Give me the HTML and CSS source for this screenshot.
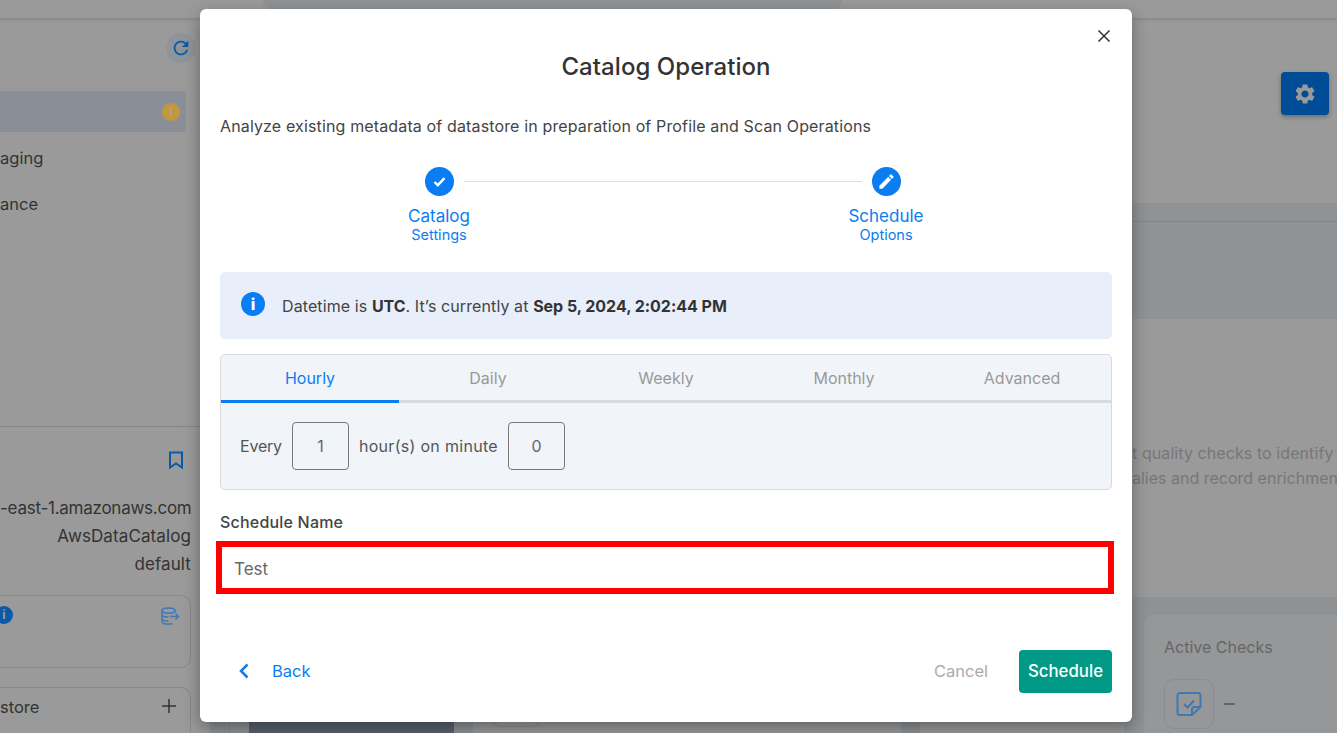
FILE: index.html
```html
<!DOCTYPE html>
<html>
<head>
	<meta charset="UTF-8">
	<title>Catalog Operation</title>
	<link rel="stylesheet" href="styles.css">
</head>
<body>
	<div class="page">
		<div class="topbar"><div class="topbar-tabs"></div></div>
		<div class="content">
			<div class="sidebar">
				<div class="refresh-row">
					<span class="refresh-btn">
						<svg width="22" height="22" viewBox="0 0 24 24"><path d="M17.65 6.35C16.2 4.9 14.21 4 12 4c-4.42 0-7.99 3.58-7.99 8s3.57 8 7.99 8c3.73 0 6.84-2.55 7.73-6h-2.08c-.82 2.33-3.04 4-5.65 4-3.31 0-6-2.69-6-6s2.69-6 6-6c1.66 0 3.14.69 4.22 1.78L13 11h7V4l-2.35 2.35z"/></svg>
					</span>
				</div>
				<div class="nav-active"><span class="warn-dot">!</span></div>
				<div class="nav-item">aging</div>
				<div class="nav-item">ance</div>
				<div class="side-info">
					<div class="bookmark-row">
						<svg width="16" height="18" viewBox="0 0 16 18"><path d="M2 1.5h12v15l-6-4-6 4z"/></svg>
					</div>
					<div class="info-line info-host">-east-1.amazonaws.com</div>
					<div class="info-line">AwsDataCatalog</div>
					<div class="info-line">default</div>
				</div>
				<div class="side-card">
					<span class="info-dot">i</span>
					<svg class="db-icon" width="20" height="20" viewBox="0 0 20 20"><ellipse cx="8.5" cy="4.5" rx="6.5" ry="2.6"/><path d="M2 4.500v11c0 1.500 3 2.600 6.500 2.600 1.500 0 3-.2 4-.6M2 8.500c0 1.500 3 2.600 6.500 2.600M2 12.500c0 1.500 3 2.600 6.500 2.600M15 4.500v2M10 10.500h8.500M15.500 7.500l3 3-3 3"/></svg>
				</div>
				<div class="side-card-add">
					<span>store</span>
					<svg width="14" height="14" viewBox="0 0 14 14"><path d="M7 0v14M0 7h14"/></svg>
				</div>
			</div>
			<div class="main">
				<div class="gear-row">
					<span class="gear-btn">
						<svg width="24" height="24" viewBox="0 0 24 24"><path d="M19.14 12.94c.04-.3.06-.61.06-.94 0-.32-.02-.64-.07-.94l2.03-1.58c.18-.14.23-.41.12-.61l-1.92-3.32c-.12-.22-.37-.29-.59-.22l-2.39.96c-.5-.38-1.03-.7-1.62-.94l-.36-2.54c-.04-.24-.24-.41-.48-.41h-3.84c-.24 0-.43.17-.47.41l-.36 2.54c-.59.24-1.13.57-1.62.94l-2.39-.96c-.22-.08-.47 0-.59.22L2.74 8.870c-.12.21-.08.47.12.61l2.03 1.58c-.05.3-.09.63-.09.94s.02.64.07.94l-2.03 1.58c-.18.14-.23.41-.12.61l1.92 3.32c.12.22.37.29.59.22l2.39-.96c.5.38 1.03.7 1.62.94l.36 2.54c.05.24.24.41.48.41h3.84c.24 0 .44-.17.47-.41l.36-2.54c.59-.24 1.13-.56 1.62-.94l2.39.96c.22.08.47 0 .59-.22l1.92-3.32c.12-.22.07-.47-.12-.61l-2.01-1.58zM12 15.600c-1.98 0-3.6-1.62-3.6-3.6s1.62-3.6 3.6-3.6 3.6 1.62 3.6 3.6-1.62 3.6-3.6 3.6z"/></svg>
					</span>
				</div>
				<div class="band-top"><div class="band-line"></div></div>
				<div class="blurb">
					<div>t quality checks to identify</div>
					<div class="blurb-tight">alies and record enrichmen</div>
				</div>
				<div class="band-bottom">
					<div class="stat-chart"><div class="chart-fill"></div></div>
					<div class="stat-wide"><div class="stat-pill"></div></div>
					<div class="stat-mid"></div>
					<div class="stat-card">
						<div class="stat-title">Active Checks</div>
						<div class="stat-value">
							<span class="stat-icon">
								<svg width="26" height="26" viewBox="0 0 26 26"><path d="M16 24H4a2.500 2.500 0 0 1-2.500-2.500v-17A2.500 2.500 0 0 1 4 2h18a2.500 2.500 0 0 1 2.500 2.500V16zM16 24v-5.500a2.500 2.500 0 0 1 2.500-2.500h6"/><path d="M8 13l3.500 3.500L18 9.500"/></svg>
							</span>
							<span class="stat-dash"></span>
						</div>
					</div>
				</div>
			</div>
		</div>
	</div>

	<div class="modal">
		<svg class="close-icon" width="14" height="14" viewBox="0 0 14 14"><path d="M1.500 1.500l11 11M12.500 1.500l-11 11"/></svg>
		<h2 class="modal-title">Catalog Operation</h2>
		<p class="modal-desc">Analyze existing metadata of datastore in preparation of Profile and Scan Operations</p>

		<div class="stepper">
			<div class="step">
				<span class="step-dot">
					<svg width="15" height="15" viewBox="0 0 15 15"><path class="tick" d="M2.500 8l3.300 3.200 6.700-7"/></svg>
				</span>
				<div class="step-name">Catalog</div>
				<div class="step-sub">Settings</div>
			</div>
			<div class="step-line"></div>
			<div class="step">
				<span class="step-dot">
					<svg width="19" height="19" viewBox="0 0 24 24"><path d="M3 17.250V21h3.750L17.810 9.940l-3.750-3.750L3 17.250zM20.710 7.040c.39-.39.39-1.020 0-1.410l-2.340-2.340c-.39-.39-1.020-.39-1.410 0l-1.830 1.830 3.750 3.750 1.830-1.830z"/></svg>
				</span>
				<div class="step-name">Schedule</div>
				<div class="step-sub">Options</div>
			</div>
		</div>

		<div class="alert">
			<span class="alert-icon">i</span>
			<span class="alert-text">Datetime is <b>UTC</b>. It’s currently at <b>Sep 5, 2024, 2:02:44 PM</b></span>
		</div>

		<div class="schedule-box">
			<div class="tabs">
				<div class="tab tab-on">Hourly</div>
				<div class="tab">Daily</div>
				<div class="tab">Weekly</div>
				<div class="tab">Monthly</div>
				<div class="tab">Advanced</div>
			</div>
			<div class="every-row">
				<span class="every-word">Every</span>
				<span class="num-box">1</span>
				<span class="every-hours">hour(s) on minute</span>
				<span class="num-box">0</span>
			</div>
		</div>

		<div class="field-label">Schedule Name</div>
		<div class="name-input">Test</div>

		<div class="modal-foot">
			<div class="back-link">
				<svg width="10" height="16" viewBox="0 0 10 16"><path d="M8.500 1.500L2 8l6.500 6.500"/></svg>
				<span>Back</span>
			</div>
			<div class="foot-right">
				<span class="cancel-link">Cancel</span>
				<span class="schedule-btn">Schedule</span>
			</div>
		</div>
	</div>
</body>
</html>
```

FILE: styles.css
```css
*{
	box-sizing: border-box;
}
html,body{
	margin: 0;
	padding: 0;
	height: 733px;
	overflow: hidden;
}
body{
	font-family: "Inter", "Liberation Sans", sans-serif;
	font-size: 16px;
	color: #333;
	background: #9a9a9a;
	position: relative;
}
.page{
	height: 733px;
	display: flex;
	flex-direction: column;
}

/* page behind the dialog */
.topbar{
	height: 19px;
	flex: none;
	background: #9a9a9a;
	border-bottom: 1px solid #8c8c8c;
	box-shadow: 0 1px 3px rgba(0,0,0,.12);
	padding-left: 263px;
}
.topbar-tabs{
	width: 579px;
	height: 9px;
	background: #8f9396;
	border-radius: 0 0 8px 8px;
}
.content{
	flex: 1;
	display: flex;
	min-height: 0;
}
.sidebar{
	width: 200px;
	flex: none;
	display: flex;
	flex-direction: column;
	overflow: hidden;
}
.refresh-row{
	flex: none;
	display: flex;
	justify-content: flex-end;
	padding: 14px 4px 0 0;
}
.refresh-btn{
	width: 30px;
	height: 30px;
	border-radius: 50%;
	background: #8e9499;
	display: flex;
	align-items: center;
	justify-content: center;
}
.refresh-btn svg{
	fill: #0b5aa8;
}
.nav-active{
	flex: none;
	width: 186px;
	height: 41px;
	margin-top: 28px;
	background: #8a8e97;
	border-radius: 0 4px 4px 0;
	display: flex;
	align-items: center;
	justify-content: flex-end;
	padding-right: 6px;
}
.warn-dot{
	width: 18px;
	height: 18px;
	border-radius: 50%;
	background: #c4983a;
	color: #b0a68c;
	font-size: 12px;
	font-weight: 700;
	line-height: 18px;
	text-align: center;
}
.nav-item{
	flex: none;
	height: 46px;
	line-height: 52px;
	font-size: 16.500px;
	color: #333;
}
.nav-item + .nav-item{
	margin-bottom: 202px;
}
.side-info{
	border-top: 1px solid #868686;
	width: 200px;
	padding-right: 9px;
	text-align: right;
	flex: none;
}
.bookmark-row{
	padding: 24px 7px 0 0;
	height: 67px;
}
.bookmark-row svg{
	fill: none;
	stroke: #0b5aa8;
	stroke-width: 2;
}
.info-line{
	height: 28px;
	line-height: 28px;
	font-size: 17px;
	letter-spacing: .1px;
	white-space: nowrap;
}
.info-host{
	letter-spacing: -.25px;
}
.side-card{
	width: 191px;
	height: 73px;
	margin-top: 17px;
	flex: none;
	border: 1px solid #888;
	border-left: none;
	border-radius: 0 10px 10px 0;
	display: flex;
	justify-content: space-between;
	align-items: flex-start;
	padding: 10px 10px 0 0;
}
.info-dot{
	width: 18px;
	height: 18px;
	margin-left: -5px;
	border-radius: 50%;
	background: #0b5aa8;
	color: #9a9a9a;
	font-size: 12px;
	font-weight: 700;
	line-height: 18px;
	text-align: center;
}
.db-icon{
	fill: none;
	stroke: #3f78b4;
	stroke-width: 1.500;
}
.side-card-add{
	width: 191px;
	height: 70px;
	margin-top: 19px;
	flex: none;
	border: 1px solid #888;
	border-left: none;
	border-radius: 0 10px 0 0;
	display: flex;
	justify-content: space-between;
	align-items: flex-start;
	padding: 10px 14px 0 0;
	line-height: 19px;
	font-size: 16.500px;
}
.side-card-add svg{
	fill: none;
	stroke: #333;
	stroke-width: 1.500;
	margin-top: 1px;
}
.main{
	flex: 1;
	min-width: 0;
	display: flex;
	flex-direction: column;
}
.gear-row{
	display: flex;
	justify-content: flex-end;
	padding: 53px 8px 0 0;
}
.gear-btn{
	width: 48px;
	height: 43px;
	border-radius: 4px;
	background: #004c97;
	box-shadow: 0 2px 4px rgba(0,0,0,.3);
	display: flex;
	align-items: center;
	justify-content: center;
}
.gear-btn svg{
	fill: #9a9a9a;
}
.band-top{
	height: 116px;
	margin: 88px 0 0 10px;
	background: #8f9396;
	padding-top: 18px;
}
.band-line{
	border-top: 1px solid #83878a;
}
.blurb{
	height: 278px;
	padding: 122px 0 0 932px;
	color: #777;
	white-space: nowrap;
	line-height: 25px;
	letter-spacing: .08px;
}
.blurb-tight{
	letter-spacing: 0;
}
.band-bottom{
	flex: 1;
	margin-left: 10px;
	min-height: 0;
	background: #8e9295;
	display: flex;
	padding: 18px 0 0 19px;
}
.stat-chart{
	width: 244px;
	flex: none;
	border-left: 1px solid #85898c;
	padding: 0 19px;
}
.chart-fill{
	height: 100%;
	background: #5a626d;
}
.stat-wide{
	width: 428px;
	flex: none;
	background: #9a9a9a;
	padding: 88px 0 0 20px;
}
.stat-pill{
	width: 48px;
	height: 24px;
	border: 1px solid #8a8a8a;
	border-radius: 8px;
}
.stat-mid{
	width: 204px;
	flex: none;
	margin-left: 19px;
	background: #9a9a9a;
}
.stat-card{
	flex: 1;
	margin-left: 20px;
	background: #959798;
	border-radius: 10px 0 0 0;
	padding: 22px 0 0 20px;
}
.stat-title{
	color: #666;
	line-height: 20px;
}
.stat-value{
	display: flex;
	align-items: center;
	margin-top: 22px;
}
.stat-icon{
	width: 50px;
	height: 50px;
	border: 1px solid #8a8e91;
	border-radius: 10px;
	display: flex;
	align-items: center;
	justify-content: center;
}
.stat-icon svg{
	fill: none;
	stroke: #3f78b4;
	stroke-width: 2;
}
.stat-dash{
	width: 11px;
	height: 2px;
	margin-left: 10px;
	background: #666;
}

/* dialog */
.modal{
	position: absolute;
	left: 200px;
	top: 9px;
	width: 932px;
	height: 713px;
	background: #fff;
	border-radius: 6px;
	box-shadow: 0 6px 16px rgba(0,0,0,.35);
	padding: 0 20px;
}
.close-icon{
	position: absolute;
	top: 20px;
	right: 21px;
	fill: none;
	stroke: #333;
	stroke-width: 1.500;
}
.modal-title{
	margin: 0;
	padding-top: 41px;
	font-size: 24px;
	font-weight: 500;
	line-height: 34px;
	letter-spacing: .05px;
	text-align: center;
}
.modal-desc{
	margin: 32px 0 0;
	line-height: 20px;
	letter-spacing: .14px;
	color: #444;
}
.stepper{
	display: flex;
	align-items: flex-start;
	margin-top: 31px;
	padding: 0 176px 0 169px;
}
.step{
	width: 100px;
	flex: none;
	display: flex;
	flex-direction: column;
	align-items: center;
	color: #0a7df2;
}
.step-dot{
	width: 29px;
	height: 29px;
	border-radius: 50%;
	background: #0a7df2;
	display: flex;
	align-items: center;
	justify-content: center;
}
.step-dot svg{
	fill: #fff;
}
.step-dot .tick{
	fill: none;
	stroke: #fff;
	stroke-width: 2.400;
}
.step-name{
	margin-top: 10px;
	font-size: 17px;
	line-height: 20px;
}
.step-sub{
	font-size: 14.500px;
	line-height: 18px;
}
.step-line{
	flex: 1;
	height: 1px;
	margin: 14px -26px 0 -25px;
	background: #ddd;
}
.alert{
	height: 67px;
	margin-top: 28px;
	background: #e8eefa;
	border-radius: 5px;
	display: flex;
	align-items: center;
	padding: 0 0 0 21px;
	gap: 17px;
	color: #444;
}
.alert-text{
	letter-spacing: .1px;
}
.alert b{
	color: #333;
	font-weight: 700;
	letter-spacing: -.03px;
}
.alert-icon{
	width: 24px;
	height: 24px;
	margin-top: -3px;
	border-radius: 50%;
	background: #0a7df2;
	color: #fff;
	font-weight: 800;
	line-height: 24px;
	text-align: center;
}
.schedule-box{
	height: 136px;
	margin-top: 15px;
	background: #f1f5fa;
	border: 1px solid #d8dadd;
	border-radius: 5px;
}
.tabs{
	display: flex;
	height: 48px;
	border-bottom: 3px solid #d7dade;
}
.tab{
	flex: 1;
	height: 48px;
	line-height: 46px;
	text-align: center;
	color: #999;
}
.tab-on{
	color: #0a7df2;
	border-bottom: 3px solid #0a7df2;
}
.every-row{
	display: flex;
	align-items: center;
	gap: 10px;
	padding: 19px 0 0 19px;
	color: #555;
}
.every-word{
	letter-spacing: -.2px;
}
.every-hours{
	letter-spacing: .3px;
}
.num-box{
	width: 57px;
	height: 48px;
	border: 1px solid #777;
	border-radius: 4px;
	line-height: 46px;
	text-align: center;
	color: #666;
}
.field-label{
	margin-top: 22px;
	font-weight: 500;
	line-height: 20px;
	letter-spacing: .2px;
	color: #444;
}
.name-input{
	height: 53px;
	margin: 9px -2px 0 -4px;
	border: 6px solid #ff0000;
	padding-left: 12px;
	font-size: 17px;
	line-height: 44px;
	color: #666;
}
.modal-foot{
	display: flex;
	justify-content: space-between;
	align-items: center;
	margin-top: 56px;
}
.back-link{
	display: flex;
	align-items: center;
	gap: 23px;
	padding-left: 19px;
	margin-bottom: 2px;
	font-size: 16.500px;
	color: #0a7df2;
}
.back-link svg{
	fill: none;
	stroke: #0a7df2;
	stroke-width: 2.500;
}
.foot-right{
	display: flex;
	align-items: center;
	gap: 31px;
}
.cancel-link{
	margin-bottom: 2px;
	font-size: 16.500px;
	color: #aaa;
}
.schedule-btn{
	width: 93px;
	height: 43px;
	background: #009985;
	border-radius: 4px;
	color: #fff;
	font-size: 16.800px;
	font-weight: 500;
	line-height: 43px;
	text-align: center;
}
```
